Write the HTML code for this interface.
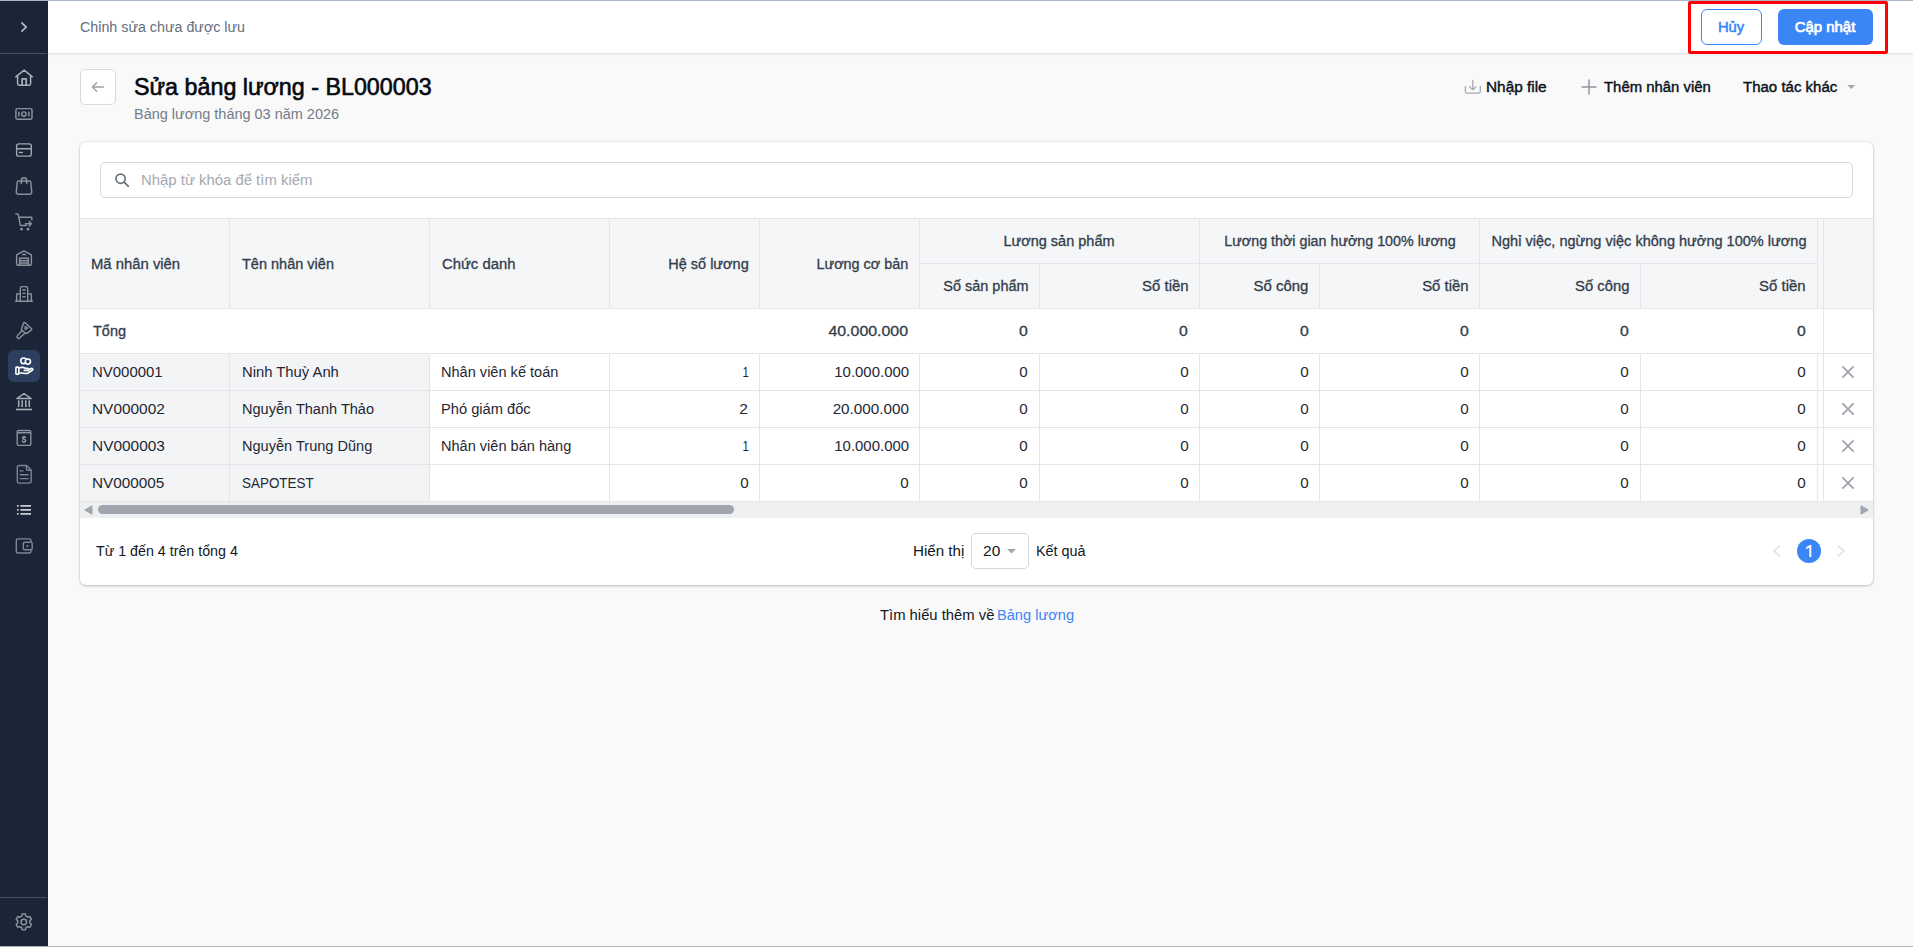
<!DOCTYPE html>
<html lang="vi"><head><meta charset="utf-8"><title>Sửa bảng lương - BL000003</title>
<style>

*{margin:0;padding:0;box-sizing:border-box}
html,body{width:1913px;height:947px;overflow:hidden}
body{position:relative;background:#f9f9f9;font-family:"Liberation Sans",sans-serif;font-size:14px;color:#1f2733}
.t{position:absolute;white-space:nowrap;display:block}
.a{position:absolute;display:block}
svg{position:absolute;overflow:visible}
.ic{fill:none;stroke:#969ca6;stroke-width:1.5;stroke-linecap:round;stroke-linejoin:round}


</style></head>
<body>
<div class="a" style="left:48px;top:0px;width:1865px;height:53px;background:#fff;box-shadow:0 1px 0 #e2e4e6,0 2px 3px rgba(0,0,0,.05);"></div>
<div class="a" style="left:0px;top:0px;width:48px;height:947px;background:#1a2537;"></div>
<div class="a" style="left:0px;top:53px;width:47px;height:1px;background:#465163;"></div>
<div class="a" style="left:0px;top:897px;width:47px;height:1px;background:#465163;"></div>
<div class="a" style="left:0px;top:0px;width:1913px;height:1px;background:#a9b4c5;"></div>
<div class="a" style="left:0px;top:946px;width:1913px;height:1px;background:#afb3b4;"></div>
<div class="a" style="left:8px;top:350px;width:32px;height:32px;background:#2d3f60;border-radius:6px;"></div>
<div class="a" style="left:1701px;top:9px;width:61px;height:36px;background:#fff;border:1px solid #3b86f7;border-radius:6px;"></div>
<div class="a" style="left:1778px;top:9px;width:95px;height:36px;background:#3b86f7;border-radius:6px;"></div>
<div class="a" style="left:1688px;top:1px;width:200px;height:53px;border:3px solid #ff0000;border-radius:2px;"></div>
<div class="a" style="left:80px;top:69px;width:36px;height:36px;background:#fff;border:1px solid #d8dbdf;border-radius:5px;"></div>
<div class="a" style="left:80px;top:142px;width:1793px;height:443px;background:#fff;border-radius:6px;box-shadow:0 0 0 1px rgba(0,0,0,.03),0 1px 3px rgba(0,0,0,.22);"></div>
<div class="a" style="left:100px;top:162px;width:1753px;height:36px;background:#fff;border:1px solid #d5d8dc;border-radius:5px;"></div>
<div class="a" style="left:80px;top:218px;width:1793px;height:91px;background:#f4f6f8;"></div>
<div class="a" style="left:80px;top:354px;width:349px;height:147px;background:#f3f4f6;"></div>
<div class="a" style="left:80px;top:218px;width:1793px;height:1px;background:#e3e5e8;"></div>
<div class="a" style="left:919px;top:263px;width:898px;height:1px;background:#e3e5e8;"></div>
<div class="a" style="left:80px;top:308px;width:1793px;height:1px;background:#e3e5e8;"></div>
<div class="a" style="left:80px;top:353px;width:1793px;height:1px;background:#e3e5e8;"></div>
<div class="a" style="left:80px;top:390px;width:1793px;height:1px;background:#e3e5e8;"></div>
<div class="a" style="left:80px;top:427px;width:1793px;height:1px;background:#e3e5e8;"></div>
<div class="a" style="left:80px;top:464px;width:1793px;height:1px;background:#e3e5e8;"></div>
<div class="a" style="left:80px;top:501px;width:1793px;height:1px;background:#e3e5e8;"></div>
<div class="a" style="left:229px;top:219px;width:1px;height:89px;background:#e3e5e8;"></div>
<div class="a" style="left:429px;top:219px;width:1px;height:89px;background:#e3e5e8;"></div>
<div class="a" style="left:609px;top:219px;width:1px;height:89px;background:#e3e5e8;"></div>
<div class="a" style="left:759px;top:219px;width:1px;height:89px;background:#e3e5e8;"></div>
<div class="a" style="left:919px;top:219px;width:1px;height:89px;background:#e3e5e8;"></div>
<div class="a" style="left:1199px;top:219px;width:1px;height:89px;background:#e3e5e8;"></div>
<div class="a" style="left:1479px;top:219px;width:1px;height:89px;background:#e3e5e8;"></div>
<div class="a" style="left:1817px;top:219px;width:1px;height:89px;background:#e3e5e8;"></div>
<div class="a" style="left:1823px;top:219px;width:1px;height:89px;background:#e3e5e8;"></div>
<div class="a" style="left:1039px;top:264px;width:1px;height:44px;background:#e3e5e8;"></div>
<div class="a" style="left:1319px;top:264px;width:1px;height:44px;background:#e3e5e8;"></div>
<div class="a" style="left:1640px;top:264px;width:1px;height:44px;background:#e3e5e8;"></div>
<div class="a" style="left:229px;top:354px;width:1px;height:147px;background:#e3e5e8;"></div>
<div class="a" style="left:429px;top:354px;width:1px;height:147px;background:#e3e5e8;"></div>
<div class="a" style="left:609px;top:354px;width:1px;height:147px;background:#e3e5e8;"></div>
<div class="a" style="left:759px;top:354px;width:1px;height:147px;background:#e3e5e8;"></div>
<div class="a" style="left:919px;top:354px;width:1px;height:147px;background:#e3e5e8;"></div>
<div class="a" style="left:1039px;top:354px;width:1px;height:147px;background:#e3e5e8;"></div>
<div class="a" style="left:1199px;top:354px;width:1px;height:147px;background:#e3e5e8;"></div>
<div class="a" style="left:1319px;top:354px;width:1px;height:147px;background:#e3e5e8;"></div>
<div class="a" style="left:1479px;top:354px;width:1px;height:147px;background:#e3e5e8;"></div>
<div class="a" style="left:1640px;top:354px;width:1px;height:147px;background:#e3e5e8;"></div>
<div class="a" style="left:1817px;top:354px;width:1px;height:147px;background:#e3e5e8;"></div>
<div class="a" style="left:1823px;top:354px;width:1px;height:147px;background:#e3e5e8;"></div>
<div class="a" style="left:1823px;top:309px;width:1px;height:44px;background:#e3e5e8;"></div>
<div class="a" style="left:80px;top:502px;width:1793px;height:16px;background:#eef0f0;"></div>
<div class="a" style="left:98px;top:505px;width:636px;height:9px;background:#a0a5af;border-radius:5px;"></div>
<svg style="left:84px;top:505px" width="9" height="10" viewBox="0 0 9 10"><path d="M8 .8v8.4L.8 5z" fill="#a0a5af" stroke="#a0a5af" stroke-width="1" stroke-linejoin="round"/></svg>
<svg style="left:1860px;top:505px" width="9" height="10" viewBox="0 0 9 10"><path d="M1 .8v8.4L8.2 5z" fill="#a0a5af" stroke="#a0a5af" stroke-width="1" stroke-linejoin="round"/></svg>
<div class="a" style="left:971px;top:533px;width:58px;height:36px;background:#fff;border:1px solid #d5d8dc;border-radius:5px;"></div>
<svg style="left:1006.5px;top:548.5px" width="9" height="5" viewBox="0 0 9 5"><path d="M0 0h9L4.5 4.6z" fill="#a3a8af"/></svg>
<div class="a" style="left:1797px;top:539px;width:24px;height:24px;background:#3b86f7;border-radius:50%;"></div>
<svg style="left:1773px;top:545px" width="8" height="12" viewBox="0 0 8 12"><path d="M7.2 .6L1 6l6.2 5.4" fill="none" stroke="#dfe1e4" stroke-width="1.5"/></svg>
<svg style="left:1837px;top:545px" width="8" height="12" viewBox="0 0 8 12"><path d="M.8 .6L7 6l-6.2 5.4" fill="none" stroke="#dfe1e4" stroke-width="1.5"/></svg>
<svg style="left:1846.5px;top:84.8px" width="8.4" height="4.4" viewBox="0 0 9 5"><path d="M0 0h9L4.5 4.6z" fill="#a3a8af"/></svg>
<svg style="left:0;top:0" width="1913" height="947" viewBox="0 0 1913 947" ><path d="M21.9 23l4.3 4.1-4.3 4.1" fill="none" stroke="#b0b5bd" stroke-width="1.8" stroke-linecap="round" stroke-linejoin="round"/><path d="M15.8 76.8L24.1 70.2l8.3 6.6M17.6 75.5v8.3a1.4 1.4 0 0 0 1.4 1.4h10.2a1.4 1.4 0 0 0 1.4-1.4v-8.3" fill="none" stroke="#aab0b8" stroke-width="1.5" stroke-linecap="round" stroke-linejoin="round"/><path d="M22.1 85v-6.2h4.1V85" fill="none" stroke="#aab0b8" stroke-width="1.7" stroke-linecap="round" stroke-linejoin="round"/><path d="M17.4 108.6h13.1a1.5 1.5 0 0 1 1.5 1.5v7.7a1.5 1.5 0 0 1-1.5 1.5H17.4a1.5 1.5 0 0 1-1.5-1.5v-7.7a1.5 1.5 0 0 1 1.5-1.5zM18.9 112.1v3.9M28.9 112.1v3.9" fill="none" stroke="#8c929c" stroke-width="1.45" stroke-linecap="round" stroke-linejoin="round"/><circle cx="23.9" cy="114" r="2.15" fill="none" stroke="#8c929c" stroke-width="1.45"/><path d="M18.8 143.9h10.3a2.2 2.2 0 0 1 2.2 2.2v7.8a2.2 2.2 0 0 1-2.2 2.2H18.8a2.2 2.2 0 0 1-2.2-2.2v-7.8a2.2 2.2 0 0 1 2.2-2.2zM16.8 148.8h14.3" fill="none" stroke="#a2a7b0" stroke-width="1.4" stroke-linecap="round" stroke-linejoin="round"/><path d="M19.5 152.6h2.9" fill="none" stroke="#a2a7b0" stroke-width="1.5" stroke-linecap="round" stroke-linejoin="round"/><path d="M18.7 180.9h10.6a1.5 1.5 0 0 1 1.5 1.4l.9 9.7a2 2 0 0 1-2 2.2H18.3a2 2 0 0 1-2-2.2l.9-9.7a1.5 1.5 0 0 1 1.5-1.4zM21.3 183.4v-2.9a2.7 2.7 0 0 1 5.4 0v2.9" fill="none" stroke="#8c929c" stroke-width="1.45" stroke-linecap="round" stroke-linejoin="round"/><path d="M15.9 214h1.5a.9.9 0 0 1 .9.7l1.9 10.1a.9.9 0 0 0 .9.7h5.3M18.9 217.3h12.9v2.6M25.3 223.7h6M29.2 221.5l2.2 2.2-2.2 2.2" fill="none" stroke="#8c929c" stroke-width="1.4" stroke-linecap="round" stroke-linejoin="round"/><circle cx="21.5" cy="229.2" r="1.4" fill="#8c929c"/><circle cx="28" cy="229.2" r="1.4" fill="#8c929c"/><path d="M16.6 264.1v-9.2l7.4-4.1 7.4 4.1v9.2a1.1 1.1 0 0 1-1.1 1.1H17.7a1.1 1.1 0 0 1-1.1-1.1zM19.6 265v-6.7h8.8V265M19.6 260.8h8.8M19.6 263h8.8M22.6 254.5h2.9" fill="none" stroke="#8c929c" stroke-width="1.4" stroke-linecap="round" stroke-linejoin="round"/><path d="M15.6 301.3h16.8M20.3 301.3v-13a1.7 1.7 0 0 1 1.7-1.7h4a1.7 1.7 0 0 1 1.7 1.7v13M20.3 293.9h-3.7v7.4M27.7 293.9h3.7v7.4M22.9 290h2.2M22.9 293.4h2.2M22.9 296.8h2.2" fill="none" stroke="#8c929c" stroke-width="1.4" stroke-linecap="round" stroke-linejoin="round"/><path d="M24.9 322.5l6.5 6.1a1 1 0 0 1-.2 1.6l-4.5 3.1a1.2 1.2 0 0 1-1.4 0l-3.5-3.3a1.2 1.2 0 0 1-.2-1.4l2.1-5.7a.8.8 0 0 1 1.2-.4zM22.3 330.3l-5 5.6a1.6 1.6 0 0 0 2.3 2.2l5.5-5.2" fill="none" stroke="#8c929c" stroke-width="1.4" stroke-linecap="round" stroke-linejoin="round"/><path d="M25.1 326.2l2.8 1.8-2.8 1.6z" fill="none" stroke="#8c929c" stroke-width="1.1" stroke-linecap="round" stroke-linejoin="round"/><circle cx="23.6" cy="360.8" r="2.85" fill="none" stroke="#ffffff" stroke-width="1.6"/><circle cx="27.9" cy="361.6" r="2.6" fill="#2d3f60" stroke="#ffffff" stroke-width="1.6"/><path d="M16.7 367.1h1.3a.8.8 0 0 1 .8.8v5.6a.8.8 0 0 1-.8.8h-1.3a.8.8 0 0 1-.8-.8v-5.6a.8.8 0 0 1 .8-.8zM18.8 368c1.4-.5 2.7-.8 3.9-.6 1.2.2 2 .9 3.2.9h1.5a1.05 1.05 0 0 1 0 2.1h-3.1M28.2 370.2l2.8-1.7a1.1 1.1 0 0 1 1.3 1.8l-4.3 2.7a3.2 3.2 0 0 1-2.2.5l-7-.8" fill="none" stroke="#ffffff" stroke-width="1.6" stroke-linecap="round" stroke-linejoin="round"/><path d="M16.9 398.5L24 393.7l7.1 4.8z" fill="none" stroke="#a9aeb7" stroke-width="1.4" stroke-linecap="round" stroke-linejoin="round"/><path d="M18.7 400.2v6.7M22.2 400.2v6.7M25.8 400.2v6.7M29.3 400.2v6.7" fill="none" stroke="#a9aeb7" stroke-width="1.5" stroke-linecap="butt" stroke-linejoin="round"/><path d="M15.9 409.5h16.2" fill="none" stroke="#a9aeb7" stroke-width="1.6" stroke-linecap="butt" stroke-linejoin="round"/><path d="M18.6 430.5h10.8a1.4 1.4 0 0 1 1.4 1.4v12.1a1.4 1.4 0 0 1-1.4 1.4H18.6a1.4 1.4 0 0 1-1.4-1.4v-12.1a1.4 1.4 0 0 1 1.4-1.4zM17.4 432.8h13.2" fill="none" stroke="#8c929c" stroke-width="1.4" stroke-linecap="round" stroke-linejoin="round"/><path d="M25.5 437.6c-.3-.6-.9-.8-1.5-.8-.9 0-1.6.5-1.6 1.2 0 1.7 3.3.9 3.3 2.6 0 .8-.8 1.3-1.7 1.3-.8 0-1.4-.3-1.7-.9M24 436v.8M24 441.9v.8" fill="none" stroke="#a0a5ae" stroke-width="1.25" stroke-linecap="round" stroke-linejoin="round"/><path d="M19.4 465.5h7.2l4.6 4.6v10.9a2.1 2.1 0 0 1-2.1 2.1h-9.7a2.1 2.1 0 0 1-2.1-2.1v-13.4a2.1 2.1 0 0 1 2.1-2.1zM26.4 465.7v3a1.5 1.5 0 0 0 1.5 1.5h3.1M20.2 470.9h2.8M20.2 474.7h8M20.2 478.6h8" fill="none" stroke="#7f8691" stroke-width="1.4" stroke-linecap="round" stroke-linejoin="round"/><path d="M20.4 505.9h10.6M20.4 509.9h10.6M20.4 513.8h10.6" fill="none" stroke="#c9ccd2" stroke-width="1.7" stroke-linecap="butt" stroke-linejoin="round"/><path d="M17 505.9h1.6M17 509.9h1.6M17 513.8h1.6" fill="none" stroke="#c9ccd2" stroke-width="1.7" stroke-linecap="butt" stroke-linejoin="round"/><path d="M17.8 538.9h11.6a1.5 1.5 0 0 1 1.5 1.5v1.9M30.9 549.8v1.7a1.5 1.5 0 0 1-1.5 1.5H17.8a1.5 1.5 0 0 1-1.5-1.5v-11.1a1.5 1.5 0 0 1 1.5-1.5M24.8 542.3h6.4a1 1 0 0 1 1 1v5.5a1 1 0 0 1-1 1h-6.4a1.5 1.5 0 0 1-1.5-1.5v-4.5a1.5 1.5 0 0 1 1.5-1.5z" fill="none" stroke="#7f8691" stroke-width="1.4" stroke-linecap="round" stroke-linejoin="round"/><circle cx="27.3" cy="546.1" r="1.05" fill="#7f8691"/><path d="M21.74 916.05L22.22 913.95L25.38 913.95L25.86 916.05L27.84 917.19L29.89 916.56L31.47 919.29L29.89 920.76L29.89 923.04L31.47 924.51L29.89 927.24L27.84 926.61L25.86 927.75L25.38 929.85L22.22 929.85L21.74 927.75L19.76 926.61L17.71 927.24L16.13 924.51L17.71 923.04L17.71 920.76L16.13 919.29L17.71 916.56L19.76 917.19z" fill="none" stroke="#8d949e" stroke-width="1.45" stroke-linecap="round" stroke-linejoin="round"/><circle cx="23.8" cy="921.9" r="2.75" fill="none" stroke="#8d949e" stroke-width="1.45"/><path d="M103.6 87H92.6M96.6 82.8L92.4 87l4.2 4.2" fill="none" stroke="#9ba1a9" stroke-width="1.4" stroke-linecap="round" stroke-linejoin="round"/><circle cx="120.6" cy="178.7" r="4.6" fill="none" stroke="#69717d" stroke-width="1.7"/><path d="M124.1 182.2l4.1 4" fill="none" stroke="#69717d" stroke-width="1.8" stroke-linecap="round" stroke-linejoin="round"/><path d="M1465.4 86.3v5.3a1.5 1.5 0 0 0 1.5 1.5h11.9a1.5 1.5 0 0 0 1.5-1.5v-5.3M1472.8 80.5v9.2M1469.5 86.6l3.3 3.3 3.3-3.3" fill="none" stroke="#a3a8b0" stroke-width="1.3" stroke-linecap="round" stroke-linejoin="round"/><path d="M1589 79.6v15M1581.5 87h15" fill="none" stroke="#8f959e" stroke-width="1.5" stroke-linecap="butt" stroke-linejoin="round"/><path d="M1842.4 366.4l11.2 11.2M1853.6 366.4l-11.2 11.2" fill="none" stroke="#9a9fa8" stroke-width="1.6" stroke-linecap="butt" stroke-linejoin="round"/><path d="M1842.4 403.4l11.2 11.2M1853.6 403.4l-11.2 11.2" fill="none" stroke="#9a9fa8" stroke-width="1.6" stroke-linecap="butt" stroke-linejoin="round"/><path d="M1842.4 440.4l11.2 11.2M1853.6 440.4l-11.2 11.2" fill="none" stroke="#9a9fa8" stroke-width="1.6" stroke-linecap="butt" stroke-linejoin="round"/><path d="M1842.4 477.4l11.2 11.2M1853.6 477.4l-11.2 11.2" fill="none" stroke="#9a9fa8" stroke-width="1.6" stroke-linecap="butt" stroke-linejoin="round"/><path d="M1811.3 545V557.1H1809.35V547.5L1806.2 549.3V547.2L1809.7 545Z" fill="#fff"/></svg>
<span class="t" id="tb" style="top:16.65px;font-size:14px;line-height:21px;color:#656e7c;left:80.03px;transform:scaleX(1.0196);transform-origin:left center;">Chỉnh sửa chưa được lưu</span>
<span class="t" id="huy" style="top:16.65px;font-size:14px;line-height:21px;color:#3b86f7;-webkit-text-stroke:0.55px #3b86f7;left:1731.07px;transform:translateX(-50%) scaleX(1.0534);">Hủy</span>
<span class="t" id="cap" style="top:16.65px;font-size:14px;line-height:21px;color:#ffffff;-webkit-text-stroke:0.70px #ffffff;left:1824.84px;transform:translateX(-50%) scaleX(1.0665);">Cập nhật</span>
<span class="t" id="title" style="top:68.98px;font-size:24px;line-height:36px;color:#05090f;-webkit-text-stroke:0.62px #05090f;left:133.69px;transform:scaleX(0.9701);transform-origin:left center;">Sửa bảng lương - BL000003</span>
<span class="t" id="sub" style="top:103.65px;font-size:14px;line-height:21px;color:#747b87;left:133.73px;transform:scaleX(1.0336);transform-origin:left center;">Bảng lương tháng 03 năm 2026</span>
<span class="t" id="a1" style="top:76.65px;font-size:14px;line-height:21px;color:#0c111b;-webkit-text-stroke:0.40px #0c111b;left:1486.09px;transform:scaleX(1.0976);transform-origin:left center;">Nhập file</span>
<span class="t" id="a2" style="top:76.65px;font-size:14px;line-height:21px;color:#0c111b;-webkit-text-stroke:0.40px #0c111b;left:1603.63px;transform:scaleX(1.0639);transform-origin:left center;">Thêm nhân viên</span>
<span class="t" id="a3" style="top:76.65px;font-size:14px;line-height:21px;color:#0c111b;-webkit-text-stroke:0.40px #0c111b;left:1742.73px;transform:scaleX(1.0724);transform-origin:left center;">Thao tác khác</span>
<span class="t" id="ph" style="top:169.65px;font-size:14px;line-height:21px;color:#a4a9b1;left:140.58px;transform:scaleX(1.0637);transform-origin:left center;">Nhập từ khóa để tìm kiếm</span>
<span class="t" id="h1" style="top:253.65px;font-size:14px;line-height:21px;color:#333d4b;-webkit-text-stroke:0.30px #333d4b;left:91.31px;transform:scaleX(1.0601);transform-origin:left center;">Mã nhân viên</span>
<span class="t" id="h2" style="top:253.65px;font-size:14px;line-height:21px;color:#333d4b;-webkit-text-stroke:0.30px #333d4b;left:242.47px;transform:scaleX(1.0364);transform-origin:left center;">Tên nhân viên</span>
<span class="t" id="h3" style="top:253.65px;font-size:14px;line-height:21px;color:#333d4b;-webkit-text-stroke:0.30px #333d4b;left:441.56px;transform:scaleX(1.0588);transform-origin:left center;">Chức danh</span>
<span class="t" id="h4" style="top:253.65px;font-size:14px;line-height:21px;color:#333d4b;-webkit-text-stroke:0.30px #333d4b;right:1164.69px;transform:scaleX(1.0358);transform-origin:right center;">Hệ số lương</span>
<span class="t" id="h5" style="top:253.65px;font-size:14px;line-height:21px;color:#333d4b;-webkit-text-stroke:0.30px #333d4b;right:1004.52px;transform:scaleX(1.0275);transform-origin:right center;">Lương cơ bản</span>
<span class="t" id="g1" style="top:230.65px;font-size:14px;line-height:21px;color:#333d4b;-webkit-text-stroke:0.30px #333d4b;left:1059.31px;transform:translateX(-50%) scaleX(1.0357);">Lương sản phẩm</span>
<span class="t" id="g2" style="top:230.65px;font-size:14px;line-height:21px;color:#333d4b;-webkit-text-stroke:0.30px #333d4b;left:1339.55px;transform:translateX(-50%) scaleX(1.0200);">Lương thời gian hưởng 100% lương</span>
<span class="t" id="g3" style="top:230.65px;font-size:14px;line-height:21px;color:#333d4b;-webkit-text-stroke:0.30px #333d4b;left:1648.62px;transform:translateX(-50%) scaleX(1.0384);">Nghỉ việc, ngừng việc không hưởng 100% lương</span>
<span class="t" id="s1" style="top:275.65px;font-size:14px;line-height:21px;color:#333d4b;-webkit-text-stroke:0.30px #333d4b;right:884.98px;transform:scaleX(1.0324);transform-origin:right center;">Số sản phẩm</span>
<span class="t" id="s2" style="top:275.65px;font-size:14px;line-height:21px;color:#333d4b;-webkit-text-stroke:0.30px #333d4b;right:724.59px;transform:scaleX(1.0662);transform-origin:right center;">Số tiền</span>
<span class="t" id="s3" style="top:275.65px;font-size:14px;line-height:21px;color:#333d4b;-webkit-text-stroke:0.30px #333d4b;right:604.39px;transform:scaleX(1.0682);transform-origin:right center;">Số công</span>
<span class="t" id="s4" style="top:275.65px;font-size:14px;line-height:21px;color:#333d4b;-webkit-text-stroke:0.30px #333d4b;right:444.48px;transform:scaleX(1.0650);transform-origin:right center;">Số tiền</span>
<span class="t" id="s5" style="top:275.65px;font-size:14px;line-height:21px;color:#333d4b;-webkit-text-stroke:0.30px #333d4b;right:283.63px;transform:scaleX(1.0569);transform-origin:right center;">Số công</span>
<span class="t" id="s6" style="top:275.65px;font-size:14px;line-height:21px;color:#333d4b;-webkit-text-stroke:0.30px #333d4b;right:107.20px;transform:scaleX(1.0678);transform-origin:right center;">Số tiền</span>
<span class="t" id="tot" style="top:320.65px;font-size:14px;line-height:21px;color:#333d4b;-webkit-text-stroke:0.30px #333d4b;left:92.53px;transform:scaleX(1.0362);transform-origin:left center;">Tổng</span>
<span class="t" id="tot5" style="top:320.65px;font-size:14px;line-height:21px;color:#333d4b;-webkit-text-stroke:0.30px #333d4b;right:1004.91px;transform:scaleX(1.1369);transform-origin:right center;">40.000.000</span>
<span class="t" id="tz0" style="top:320.65px;font-size:14px;line-height:21px;color:#333d4b;-webkit-text-stroke:0.30px #333d4b;right:884.88px;transform:scaleX(1.1264);transform-origin:right center;">0</span>
<span class="t" id="tz1" style="top:320.65px;font-size:14px;line-height:21px;color:#333d4b;-webkit-text-stroke:0.30px #333d4b;right:724.95px;transform:scaleX(1.1240);transform-origin:right center;">0</span>
<span class="t" id="tz2" style="top:320.65px;font-size:14px;line-height:21px;color:#333d4b;-webkit-text-stroke:0.30px #333d4b;right:604.59px;transform:scaleX(1.1240);transform-origin:right center;">0</span>
<span class="t" id="tz3" style="top:320.65px;font-size:14px;line-height:21px;color:#333d4b;-webkit-text-stroke:0.30px #333d4b;right:444.59px;transform:scaleX(1.1240);transform-origin:right center;">0</span>
<span class="t" id="tz4" style="top:320.65px;font-size:14px;line-height:21px;color:#333d4b;-webkit-text-stroke:0.30px #333d4b;right:283.88px;transform:scaleX(1.1264);transform-origin:right center;">0</span>
<span class="t" id="tz5" style="top:320.65px;font-size:14px;line-height:21px;color:#333d4b;-webkit-text-stroke:0.30px #333d4b;right:106.88px;transform:scaleX(1.1264);transform-origin:right center;">0</span>
<span class="t" id="r0a" style="top:361.65px;font-size:14px;line-height:21px;color:#1f2733;left:91.72px;transform:scaleX(1.0680);transform-origin:left center;">NV000001</span>
<span class="t" id="r0b" style="top:361.65px;font-size:14px;line-height:21px;color:#1f2733;left:241.84px;transform:scaleX(1.0576);transform-origin:left center;">Ninh Thuỳ Anh</span>
<span class="t" id="r0c" style="top:361.65px;font-size:14px;line-height:21px;color:#1f2733;left:440.97px;transform:scaleX(1.0401);transform-origin:left center;">Nhân viên kế toán</span>
<span class="t" id="r0d" style="top:361.65px;font-size:14px;line-height:21px;color:#1f2733;right:1164.55px;transform:scaleX(0.8188);transform-origin:right center;">1</span>
<span class="t" id="r0e" style="top:361.65px;font-size:14px;line-height:21px;color:#1f2733;right:1004.05px;transform:scaleX(1.0674);transform-origin:right center;">10.000.000</span>
<span class="t" id="r0z0" style="top:361.65px;font-size:14px;line-height:21px;color:#1f2733;right:885.27px;transform:scaleX(1.0867);transform-origin:right center;">0</span>
<span class="t" id="r0z1" style="top:361.65px;font-size:14px;line-height:21px;color:#1f2733;right:724.69px;transform:scaleX(1.0867);transform-origin:right center;">0</span>
<span class="t" id="r0z2" style="top:361.65px;font-size:14px;line-height:21px;color:#1f2733;right:604.56px;transform:scaleX(1.0870);transform-origin:right center;">0</span>
<span class="t" id="r0z3" style="top:361.65px;font-size:14px;line-height:21px;color:#1f2733;right:444.56px;transform:scaleX(1.0870);transform-origin:right center;">0</span>
<span class="t" id="r0z4" style="top:361.65px;font-size:14px;line-height:21px;color:#1f2733;right:284.27px;transform:scaleX(1.0867);transform-origin:right center;">0</span>
<span class="t" id="r0z5" style="top:361.65px;font-size:14px;line-height:21px;color:#1f2733;right:107.27px;transform:scaleX(1.0867);transform-origin:right center;">0</span>
<span class="t" id="r1a" style="top:398.65px;font-size:14px;line-height:21px;color:#1f2733;left:91.56px;transform:scaleX(1.1003);transform-origin:left center;">NV000002</span>
<span class="t" id="r1b" style="top:398.65px;font-size:14px;line-height:21px;color:#1f2733;left:241.91px;transform:scaleX(1.0384);transform-origin:left center;">Nguyễn Thanh Thảo</span>
<span class="t" id="r1c" style="top:398.65px;font-size:14px;line-height:21px;color:#1f2733;left:440.97px;transform:scaleX(1.0479);transform-origin:left center;">Phó giám đốc</span>
<span class="t" id="r1d" style="top:398.65px;font-size:14px;line-height:21px;color:#1f2733;right:1164.94px;transform:scaleX(1.1120);transform-origin:right center;">2</span>
<span class="t" id="r1e" style="top:398.65px;font-size:14px;line-height:21px;color:#1f2733;right:1004.28px;transform:scaleX(1.0909);transform-origin:right center;">20.000.000</span>
<span class="t" id="r1z0" style="top:398.65px;font-size:14px;line-height:21px;color:#1f2733;right:885.27px;transform:scaleX(1.0867);transform-origin:right center;">0</span>
<span class="t" id="r1z1" style="top:398.65px;font-size:14px;line-height:21px;color:#1f2733;right:724.69px;transform:scaleX(1.0867);transform-origin:right center;">0</span>
<span class="t" id="r1z2" style="top:398.65px;font-size:14px;line-height:21px;color:#1f2733;right:604.56px;transform:scaleX(1.0870);transform-origin:right center;">0</span>
<span class="t" id="r1z3" style="top:398.65px;font-size:14px;line-height:21px;color:#1f2733;right:444.56px;transform:scaleX(1.0870);transform-origin:right center;">0</span>
<span class="t" id="r1z4" style="top:398.65px;font-size:14px;line-height:21px;color:#1f2733;right:284.27px;transform:scaleX(1.0867);transform-origin:right center;">0</span>
<span class="t" id="r1z5" style="top:398.65px;font-size:14px;line-height:21px;color:#1f2733;right:107.27px;transform:scaleX(1.0867);transform-origin:right center;">0</span>
<span class="t" id="r2a" style="top:435.65px;font-size:14px;line-height:21px;color:#1f2733;left:91.54px;transform:scaleX(1.1012);transform-origin:left center;">NV000003</span>
<span class="t" id="r2b" style="top:435.65px;font-size:14px;line-height:21px;color:#1f2733;left:241.91px;transform:scaleX(1.0398);transform-origin:left center;">Nguyễn Trung Dũng</span>
<span class="t" id="r2c" style="top:435.65px;font-size:14px;line-height:21px;color:#1f2733;left:440.97px;transform:scaleX(1.0395);transform-origin:left center;">Nhân viên bán hàng</span>
<span class="t" id="r2d" style="top:435.65px;font-size:14px;line-height:21px;color:#1f2733;right:1164.55px;transform:scaleX(0.8188);transform-origin:right center;">1</span>
<span class="t" id="r2e" style="top:435.65px;font-size:14px;line-height:21px;color:#1f2733;right:1004.05px;transform:scaleX(1.0674);transform-origin:right center;">10.000.000</span>
<span class="t" id="r2z0" style="top:435.65px;font-size:14px;line-height:21px;color:#1f2733;right:885.27px;transform:scaleX(1.0867);transform-origin:right center;">0</span>
<span class="t" id="r2z1" style="top:435.65px;font-size:14px;line-height:21px;color:#1f2733;right:724.69px;transform:scaleX(1.0867);transform-origin:right center;">0</span>
<span class="t" id="r2z2" style="top:435.65px;font-size:14px;line-height:21px;color:#1f2733;right:604.56px;transform:scaleX(1.0870);transform-origin:right center;">0</span>
<span class="t" id="r2z3" style="top:435.65px;font-size:14px;line-height:21px;color:#1f2733;right:444.56px;transform:scaleX(1.0870);transform-origin:right center;">0</span>
<span class="t" id="r2z4" style="top:435.65px;font-size:14px;line-height:21px;color:#1f2733;right:284.27px;transform:scaleX(1.0867);transform-origin:right center;">0</span>
<span class="t" id="r2z5" style="top:435.65px;font-size:14px;line-height:21px;color:#1f2733;right:107.27px;transform:scaleX(1.0867);transform-origin:right center;">0</span>
<span class="t" id="r3a" style="top:472.65px;font-size:14px;line-height:21px;color:#1f2733;left:91.64px;transform:scaleX(1.0938);transform-origin:left center;">NV000005</span>
<span class="t" id="r3b" style="top:472.65px;font-size:14px;line-height:21px;color:#1f2733;left:241.74px;transform:scaleX(0.9605);transform-origin:left center;">SAPOTEST</span>
<span class="t" id="r3d" style="top:472.65px;font-size:14px;line-height:21px;color:#1f2733;right:1164.45px;transform:scaleX(1.0867);transform-origin:right center;">0</span>
<span class="t" id="r3e" style="top:472.65px;font-size:14px;line-height:21px;color:#1f2733;right:1004.32px;transform:scaleX(1.0870);transform-origin:right center;">0</span>
<span class="t" id="r3z0" style="top:472.65px;font-size:14px;line-height:21px;color:#1f2733;right:885.27px;transform:scaleX(1.0867);transform-origin:right center;">0</span>
<span class="t" id="r3z1" style="top:472.65px;font-size:14px;line-height:21px;color:#1f2733;right:724.69px;transform:scaleX(1.0867);transform-origin:right center;">0</span>
<span class="t" id="r3z2" style="top:472.65px;font-size:14px;line-height:21px;color:#1f2733;right:604.56px;transform:scaleX(1.0870);transform-origin:right center;">0</span>
<span class="t" id="r3z3" style="top:472.65px;font-size:14px;line-height:21px;color:#1f2733;right:444.56px;transform:scaleX(1.0870);transform-origin:right center;">0</span>
<span class="t" id="r3z4" style="top:472.65px;font-size:14px;line-height:21px;color:#1f2733;right:284.27px;transform:scaleX(1.0867);transform-origin:right center;">0</span>
<span class="t" id="r3z5" style="top:472.65px;font-size:14px;line-height:21px;color:#1f2733;right:107.27px;transform:scaleX(1.0867);transform-origin:right center;">0</span>
<span class="t" id="pg1" style="top:540.65px;font-size:14px;line-height:21px;color:#0f1824;left:96.08px;transform:scaleX(1.0176);transform-origin:left center;">Từ 1 đến 4 trên tổng 4</span>
<span class="t" id="pg2" style="top:540.65px;font-size:14px;line-height:21px;color:#0f1824;left:912.72px;transform:scaleX(1.0818);transform-origin:left center;">Hiển thị</span>
<span class="t" id="pg3" style="top:540.65px;font-size:14px;line-height:21px;color:#0f1824;left:983.19px;transform:scaleX(1.1083);transform-origin:left center;">20</span>
<span class="t" id="pg4" style="top:540.65px;font-size:14px;line-height:21px;color:#0f1824;left:1035.88px;transform:scaleX(1.0267);transform-origin:left center;">Kết quả</span>
<span class="t" id="ft1" style="top:604.65px;font-size:14px;line-height:21px;color:#0f1824;left:880.00px;transform:scaleX(1.0575);transform-origin:left center;">Tìm hiểu thêm về</span>
<span class="t" id="ft2" style="top:604.65px;font-size:14px;line-height:21px;color:#3b86f7;left:997.49px;transform:scaleX(1.0434);transform-origin:left center;">Bảng lương</span>
</body></html>
